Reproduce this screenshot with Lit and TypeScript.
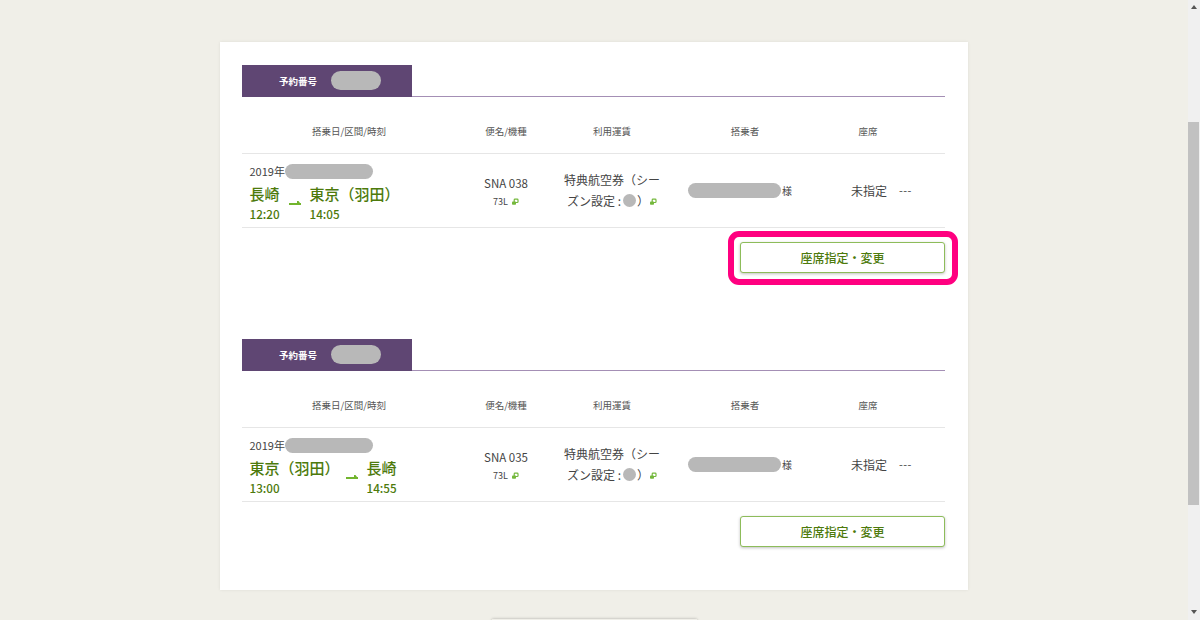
import { LitElement, html, css } from "lit";
import { customElement } from "lit/decorators.js";

const linkIcon = html`<svg class="ext" viewBox="0 0 8 8" width="8" height="8" aria-hidden="true">
  <rect x="3.2" y="1.2" width="3.8" height="3.3" rx="0.8" fill="none" stroke="#74b83c" stroke-width="1.2"/>
  <rect x="1" y="3.4" width="4" height="3.4" rx="0.8" fill="#74b83c"/>
</svg>`;

const arrow = html`<svg class="arrow" viewBox="0 0 12 5" width="12" height="5" aria-hidden="true">
  <path d="M0 3H12V5H0Z M8 1H9.5L11 3H8Z" fill="#72b52e"/>
</svg>`;

interface Booking {
  flight: string;
  from: string;
  to: string;
  dep: string;
  arr: string;
  fromWidth: number;
}

const bookings: Booking[] = [
  { flight: "SNA 038", from: "長崎", to: "東京（羽田）", dep: "12:20", arr: "14:05", fromWidth: 60 },
  { flight: "SNA 035", from: "東京（羽田）", to: "長崎", dep: "13:00", arr: "14:55", fromWidth: 117 },
];

@customElement("app-root")
export class AppRoot extends LitElement {
  static styles = css`
    :host {
      display: flex;
      height: 620px;
      overflow: hidden;
      background: #f0efe8;
      font-family: "Noto Sans CJK JP", "Noto Sans", sans-serif;
      color: #444;
    }
    .page {
      flex: 1;
      min-width: 0;
      padding-top: 42px;
      display: flex;
      flex-direction: column;
      align-items: center;
    }
    .card {
      width: 748px;
      height: 548px;
      flex: none;
      box-sizing: border-box;
      padding: 0 23px 0 22px;
      background: #fff;
      box-shadow: 0 0 3px rgba(0, 0, 0, 0.08);
    }
    .stub {
      width: 205px;
      height: 3px;
      flex: none;
      margin-top: 29px;
      background: #f0efe8;
      box-shadow: 0 0 3px rgba(0, 0, 0, 0.3);
    }
    .section {
      height: 274px;
      box-sizing: border-box;
      padding-top: 23px;
    }
    .tab-line {
      height: 32px;
      box-sizing: border-box;
      border-bottom: 1px solid #a48fb5;
    }
    .tab {
      width: 170px;
      height: 32px;
      box-sizing: border-box;
      padding-left: 37px;
      display: flex;
      align-items: center;
      gap: 14px;
      background: #5f4673;
      color: #fff;
      font-size: 9.5px;
      font-weight: 700;
    }
    .tab .pill {
      width: 50px;
      height: 19px;
      border-radius: 10px;
      margin-top: -1px;
    }
    .pill {
      display: inline-block;
      flex: none;
      background: #b8b8b8;
    }
    .grid {
      display: grid;
      grid-template-columns: 214px 100px 112px 154px 92px 31px;
    }
    .head {
      height: 57px;
      padding-top: 11px;
      align-items: center;
      border-bottom: 1px solid #e6e6e6;
      box-sizing: border-box;
      font-size: 9.5px;
      color: #555;
      text-align: center;
    }
    .row {
      height: 74px;
      align-items: center;
      border-bottom: 1px solid #e6e6e6;
      box-sizing: border-box;
      font-size: 12px;
      color: #444;
      text-align: center;
    }
    .route {
      text-align: left;
      padding-left: 7.5px;
      margin-top: 2px;
    }
    .date {
      display: flex;
      align-items: center;
      height: 18px;
      font-size: 11px;
    }
    .date .pill {
      width: 88px;
      height: 15px;
      border-radius: 8px;
    }
    .cities {
      display: flex;
      align-items: center;
      height: 21px;
      margin-top: 3px;
      color: #4d7a0c;
      font-size: 15px;
      font-weight: 500;
      line-height: 21px;
    }
    .times {
      display: flex;
      height: 15px;
      margin-top: 2px;
      color: #4d7a0c;
      font-size: 11.7px;
      font-weight: 500;
      line-height: 15px;
    }
    .arrow {
      flex: none;
      margin-top: 17px;
    }
    .slot {
      flex: none;
    }
    .flight-no {
      line-height: 18px;
      font-size: 11.5px;
    }
    .model {
      font-size: 9px;
      line-height: 13px;
      margin-top: 3px;
      display: flex;
      justify-content: center;
      align-items: center;
      gap: 3px;
    }
    .model .ext {
      margin-top: 1px;
    }
    .fare {
      line-height: 21px;
      margin-top: -2px;
      white-space: nowrap;
    }
    .fare-2 {
      display: flex;
      justify-content: center;
      align-items: center;
    }
    .fare-2 .pill {
      width: 13px;
      height: 13px;
      margin: 0 1px 0 2px;
      border-radius: 50%;
    }
    .fare-2 .ext {
      margin-top: 3px;
    }
    .pax {
      display: flex;
      align-items: center;
      gap: 1px;
      padding-left: 20px;
      font-size: 10px;
    }
    .pax .pill {
      width: 93px;
      height: 15px;
      border-radius: 8px;
    }
    .seat {
      display: flex;
      align-items: center;
      padding-left: 29px;
      white-space: nowrap;
      margin-top: -1px;
    }
    .dash {
      margin-left: 12px;
      font-size: 11px;
      letter-spacing: 0.4px;
    }
    .actions {
      display: flex;
      justify-content: flex-end;
      margin-top: 14px;
    }
    .btn-wrap {
      position: relative;
      display: flex;
    }
    .btn {
      width: 205px;
      height: 31px;
      box-sizing: border-box;
      padding: 0;
      border: 1px solid #8dbc5a;
      border-radius: 3px;
      background: #fff;
      box-shadow: 0 1px 3px rgba(0, 0, 0, 0.25);
      color: #4d7a0c;
      font: 500 12px "Noto Sans CJK JP", "Noto Sans", sans-serif;
    }
    .mark {
      position: absolute;
      left: -12px;
      top: -11px;
      width: 218px;
      height: 42px;
      border: 6px solid #ff0080;
      border-radius: 11px;
      pointer-events: none;
    }
    .scrollbar {
      width: 12px;
      flex: none;
      display: flex;
      flex-direction: column;
      align-items: center;
      box-sizing: border-box;
      background: #f0f0f0;
    }
    .tri-up,
    .tri-down {
      flex: none;
      width: 0;
      height: 0;
      border-left: 3.5px solid transparent;
      border-right: 3.5px solid transparent;
    }
    .tri-up {
      margin-top: 5px;
      border-bottom: 4px solid #555;
    }
    .tri-down {
      margin-top: auto;
      margin-bottom: 6px;
      border-top: 4px solid #555;
    }
    .thumb {
      align-self: stretch;
      height: 383px;
      margin: 113px 1px 0 0;
      flex: none;
      background: #c1c1c1;
    }
  `;

  private renderBooking(b: Booking, marked: boolean) {
    return html`<section class="section">
      <div class="tab-line">
        <div class="tab"><span>予約番号</span><span class="pill"></span></div>
      </div>
      <div class="grid head">
        <div>搭乗日/区間/時刻</div>
        <div>便名/機種</div>
        <div>利用運賃</div>
        <div>搭乗者</div>
        <div>座席</div>
        <div></div>
      </div>
      <div class="grid row">
        <div class="route">
          <div class="date"><span>2019年</span><span class="pill"></span></div>
          <div class="cities">
            <span class="slot" style="width:${b.fromWidth - 21}px">${b.from}</span>
            ${arrow}
            <span class="slot" style="margin-left:9px">${b.to}</span>
          </div>
          <div class="times">
            <span class="slot" style="width:${b.fromWidth}px">${b.dep}</span>
            <span class="slot">${b.arr}</span>
          </div>
        </div>
        <div>
          <div class="flight-no">${b.flight}</div>
          <div class="model">73L ${linkIcon}</div>
        </div>
        <div class="fare">
          <div>特典航空券（シー</div>
          <div class="fare-2">ズン設定 :<span class="pill"></span>）${linkIcon}</div>
        </div>
        <div class="pax"><span class="pill"></span><span>様</span></div>
        <div class="seat"><span>未指定</span><span class="dash">---</span></div>
        <div></div>
      </div>
      <div class="actions">
        <div class="btn-wrap">
          <button class="btn">座席指定・変更</button>
          ${marked ? html`<div class="mark"></div>` : null}
        </div>
      </div>
    </section>`;
  }

  render() {
    return html`
      <div class="page">
        <div class="card">
          ${bookings.map((b, i) => this.renderBooking(b, i === 0))}
        </div>
        <div class="stub"></div>
      </div>
      <div class="scrollbar">
        <div class="tri-up"></div>
        <div class="thumb"></div>
        <div class="tri-down"></div>
      </div>
    `;
  }
}
